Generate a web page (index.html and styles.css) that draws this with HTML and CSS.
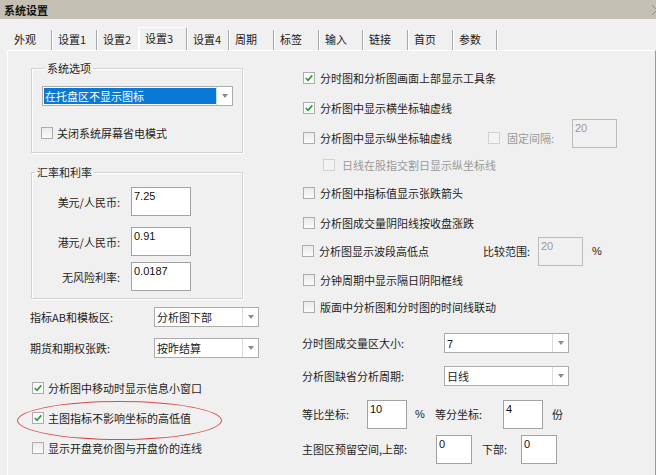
FILE: index.html
```html
<!DOCTYPE html>
<html>
<head>
<meta charset="utf-8">
<link rel="stylesheet" href="styles.css">
</head>
<body>
<div class="window">
  <div class="titlebar">
    <span class="title">系统设置</span>
    <svg class="chev" width="7" height="12" viewBox="0 0 7 12"><path d="M1 1 L6 6 L1 11" fill="none" stroke="#8c8c8c" stroke-width="1"/></svg>
  </div>
  <div class="tabs">
    <div class="tab w44">外观</div>
    <div class="tab">设置1</div>
    <div class="tab w42">设置2</div>
    <div class="tab active">设置3</div>
    <div class="tab w42">设置4</div>
    <div class="tab">周期</div>
    <div class="tab">标签</div>
    <div class="tab w44">输入</div>
    <div class="tab">链接</div>
    <div class="tab">首页</div>
    <div class="tab w44">参数</div>
  </div>
  <div class="panel">
    <div class="col-left">
      <fieldset class="group g1">
        <legend>系统选项</legend>
        <div class="combo combo-g1 selected">
          <span class="combo-text">在托盘区不显示图标</span>
          <span class="combo-btn"><i class="arrow"></i></span>
        </div>
        <div class="check g1-check"><span class="cb"></span>关闭系统屏幕省电模式</div>
      </fieldset>

      <fieldset class="group g2">
        <legend>汇率和利率</legend>
        <div class="rate-row r1"><span class="rate-label">美元/人民币:</span><span class="input rate-input">7.25</span></div>
        <div class="rate-row r2"><span class="rate-label">港元/人民币:</span><span class="input rate-input">0.91</span></div>
        <div class="rate-row r3"><span class="rate-label">无风险利率:</span><span class="input rate-input">0.0187</span></div>
      </fieldset>

      <div class="field-row fr1"><span class="field-label l-left">指标AB和模板区:</span>
        <div class="combo combo-left"><span class="combo-text">分析图下部</span><span class="combo-btn"><i class="arrow"></i></span></div>
      </div>
      <div class="field-row fr2"><span class="field-label l-left">期货和期权张跌:</span>
        <div class="combo combo-left"><span class="combo-text">按昨结算</span><span class="combo-btn"><i class="arrow"></i></span></div>
      </div>

      <div class="left-checks">
        <div class="check lc"><span class="cb on"><svg width="10" height="10" viewBox="0 0 10 10"><path d="M1.8 5 L4 7.3 L8.3 2.4" fill="none" stroke="#2f9a34" stroke-width="1.6"/></svg></span>分析图中移动时显示信息小窗口</div>
        <div class="check lc hl"><span class="cb on"><svg width="10" height="10" viewBox="0 0 10 10"><path d="M1.8 5 L4 7.3 L8.3 2.4" fill="none" stroke="#2f9a34" stroke-width="1.6"/></svg></span>主图指标不影响坐标的高低值</div>
        <div class="check lc"><span class="cb"></span>显示开盘竞价图与开盘价的连线</div>
      </div>
    </div>

    <div class="col-right">
      <div class="check rr h30"><span class="cb on"><svg width="10" height="10" viewBox="0 0 10 10"><path d="M1.8 5 L4 7.3 L8.3 2.4" fill="none" stroke="#2f9a34" stroke-width="1.6"/></svg></span>分时图和分析图画面上部显示工具条</div>
      <div class="check rr h30"><span class="cb on"><svg width="10" height="10" viewBox="0 0 10 10"><path d="M1.8 5 L4 7.3 L8.3 2.4" fill="none" stroke="#2f9a34" stroke-width="1.6"/></svg></span>分析图中显示横坐标轴虚线</div>
      <div class="row rr h30">
        <span class="check part-a"><span class="cb"></span>分析图中显示纵坐标轴虚线</span>
        <span class="check disabled"><span class="cb dis"></span><span class="fix-label">固定间隔:</span></span>
        <span class="input dis-input fix-input">20</span>
      </div>
      <div class="check rr sub h24 disabled"><span class="cb dis"></span>日线在股指交割日显示纵坐标线</div>
      <div class="check rr h32"><span class="cb"></span>分析图中指标值显示张跌箭头</div>
      <div class="check rr h28"><span class="cb"></span>分析图成交量阴阳线按收盘涨跌</div>
      <div class="row rr0 h28">
        <span class="check part-b"><span class="cb"></span>分析图显示波段高低点</span>
        <span class="cmp-label">比较范围:</span>
        <span class="input dis-input cmp-input">20</span>
        <span class="pct">%</span>
      </div>
      <div class="check rr h30"><span class="cb"></span>分钟周期中显示隔日阴阳框线</div>
      <div class="check rr h24"><span class="cb"></span>版面中分析图和分时图的时间线联动</div>

      <div class="row rf1"><span class="field-label l-right">分时图成交量区大小:</span>
        <div class="combo combo-right"><span class="combo-text">7</span><span class="combo-btn"><i class="arrow"></i></span></div>
      </div>
      <div class="row rf2"><span class="field-label l-right">分析图缺省分析周期:</span>
        <div class="combo combo-right"><span class="combo-text">日线</span><span class="combo-btn"><i class="arrow"></i></span></div>
      </div>
      <div class="row rf3">
        <span class="field-label l-dbl">等比坐标:</span>
        <span class="input num-input">10</span>
        <span class="unit pct2">%</span>
        <span class="field-label l-dfen">等分坐标:</span>
        <span class="input num-input">4</span>
        <span class="unit fen">份</span>
      </div>
      <div class="row rf4">
        <span class="field-label l-res">主图区预留空间,上部:</span>
        <span class="input small-input">0</span>
        <span class="field-label l-down">下部:</span>
        <span class="input small-input">0</span>
      </div>
    </div>
  </div>
</div>
</body>
</html>
```

FILE: styles.css
```css
* { box-sizing: border-box; }
html, body { margin: 0; padding: 0; }
body {
  background: #f0f0f0;
  font-family: "Noto Sans CJK SC", "Noto Sans", sans-serif;
  font-size: 11px;
  line-height: 14px;
  color: #1e1e1e;
  overflow: hidden;
}
.window {
  width: 656px;
  height: 475px;
  display: flex;
  flex-direction: column;
}
.titlebar {
  height: 19px;
  background: #c5c0b4;
  display: flex;
  align-items: center;
  justify-content: space-between;
  padding-left: 4px;
}
.title { font-weight: bold; color: #111; }
.chev { margin-right: -2px; }

.tabs {
  height: 31px;
  display: flex;
  align-items: flex-end;
  padding-left: 8px;
}
.tab {
  width: 45px;
  height: 20px;
  line-height: 19px;
  padding-left: 6px;
  border-right: 1px solid #a8a8a8;
  box-shadow: 1px 0 0 #ffffff;
  white-space: nowrap;
  color: #1a1a1a;
}
.tab.w44 { width: 44px; }
.tab.w42 { width: 42px; }
.tab.active {
  width: 49px;
  height: 23px;
  line-height: 20px;
  border-left: 1px solid #ffffff;
  border-top: 1px solid #ffffff;
  margin-left: -1px;
}

.panel {
  flex: 1;
  margin-left: 7px;
  border-top: 1px solid #ffffff;
  border-left: 1px solid #ffffff;
  border-right: 1px solid #9a9a9a;
  display: grid;
  grid-template-columns: 272px 1fr;
  padding-left: 22px;
}

/* ---------- left column ---------- */
.col-left { padding-top: 10px; }
.group {
  margin: 0 0 0 1px;
  width: 212px;
  border: 1px solid #d2d2d2;
  box-shadow: 1px 1px 0 #ffffff, inset 1px 1px 0 #ffffff;
  min-width: 0;
}
.group legend {
  padding: 0 2px;
  margin-left: 3px;
  line-height: 14px;
}
.g1 { padding: 11px 10px 10px 10px; }
.g2 { margin-top: 12px; padding: 8px 0 7px 0; }

.combo {
  display: flex;
  height: 20px;
  background: #ffffff;
  border: 1px solid #acacac;
}
.combo-text {
  flex: 1;
  padding-left: 2px;
  line-height: 18px;
  white-space: nowrap;
  overflow: hidden;
}
.combo.selected .combo-text {
  background: #0a78d7;
  color: #ffffff;
  margin: 1px 0 1px 1px;
  line-height: 16px;
  padding-left: 1px;
}
.combo-btn {
  width: 16px;
  border-left: 1px solid #dcdcdc;
  display: flex;
  align-items: center;
  justify-content: center;
}
.arrow {
  width: 0;
  height: 0;
  border-left: 3.5px solid transparent;
  border-right: 3.5px solid transparent;
  border-top: 4px solid #8c8c8c;
}
.combo-g1 { width: 191px; }
.combo-left { width: 105px; }
.combo-right { width: 125px; height: 20px; }

.check {
  display: flex;
  align-items: center;
  white-space: nowrap;
}
.cb {
  width: 12px;
  height: 12px;
  flex: none;
  border: 1px solid #adadad;
  background: linear-gradient(#eaeaea, #fbfbfb);
  margin-right: 5px;
  display: flex;
  align-items: center;
  justify-content: center;
}
.cb.on { background: #fafafa; }
.cb.dis { border-color: #d2d2d2; background: #f3f3f3; }
.disabled { color: #9a9a9a; }

.g1-check { margin-top: 18px; height: 18px; margin-left: -1px; }
.g1-check .cb { margin-right: 4px; }

.rate-row { display: flex; align-items: center; height: 29px; }
.rate-row.r2 { margin-top: 11px; }
.rate-row.r3 { margin-top: 6px; }
.rate-label { width: 88px; text-align: right; margin-right: 11px; }

.input {
  display: block;
  background: #ffffff;
  border: 1px solid #a2a2a2;
  font-family: "Liberation Sans", Arial, sans-serif;
  font-size: 11px;
  line-height: 14px;
  padding: 1px 2px;
  color: #111;
  flex: none;
}
.rate-input { width: 60px; height: 29px; }
.dis-input { background: #f0f0f0; border-color: #bcbcbc; color: #999999; }

.field-row { display: flex; align-items: center; height: 20px; }
.fr1 { margin-top: 8px; }
.fr2 { margin-top: 11px; }
.l-left { width: 124px; }

.left-checks { margin-top: 15px; margin-left: 2px; }
.lc { height: 30px; }
.lc .cb { margin-right: 4px; }
.hl { position: relative; }
.hl::before {
  content: "";
  position: absolute;
  left: -15px;
  top: -2px;
  width: 203px;
  height: 37px;
  border: 1.5px solid #dd4a4a;
  border-radius: 50%;
}

/* ---------- right column ---------- */
.col-right { padding-top: 12px; }
.row { display: flex; align-items: center; white-space: nowrap; }
.rr { margin-left: 1px; }
.rr0 { margin-left: 0; }
.sub { margin-left: 21px; }
.h24 { height: 24px; }
.h28 { height: 28px; }
.h30 { height: 30px; }
.h32 { height: 32px; }
.part-a { width: 185px; }
.disabled .cb, .cb.dis { margin-right: 7px; }
.fix-label { width: 65px; }
.fix-input { width: 45px; height: 29px; align-self: flex-start; margin-top: -4px; }
.part-b { width: 181px; }
.cmp-label { width: 55px; }
.cmp-input { width: 45px; height: 29px; }
.pct { margin-left: 9px; font-family: "Liberation Sans", Arial, sans-serif; }

.rf1 { margin-top: 8px; height: 32px; }
.rf2 { height: 34px; }
.rf3 { margin-top: 6px; height: 30px; }
.rf4 { margin-top: 5px; height: 30px; }
.l-right { width: 142px; }
.l-dbl { width: 65px; }
.l-dfen { width: 68px; }
.num-input { width: 40px; height: 29px; }
.unit { padding-left: 8px; }
.pct2 { width: 28px; font-family: "Liberation Sans", Arial, sans-serif; }
.fen { width: 20px; padding-left: 9px; }
.l-res { width: 134px; }
.small-input { width: 36px; height: 29px; }
.l-down { width: 39px; margin-left: 10px; }
```
